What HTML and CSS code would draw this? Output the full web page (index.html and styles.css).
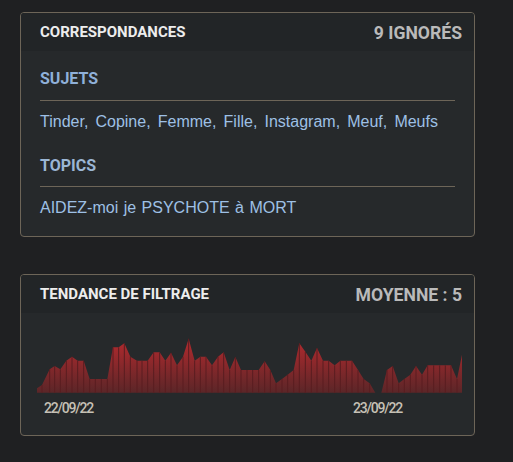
FILE: index.html
```html
<!DOCTYPE html>
<html lang="fr">
<head>
<meta charset="utf-8">
<title>Correspondances</title>
<link rel="stylesheet" href="styles.css">
</head>
<body>
<div class="page">
  <section class="card">
    <header class="card-head">
      <h2 class="card-title">CORRESPONDANCES</h2>
      <span class="card-stat">9 IGNORÉS</span>
    </header>
    <div class="card-body">
      <h3 class="sec-title">SUJETS</h3>
      <p class="sec-text sec-list">Tinder, Copine, Femme, Fille, Instagram, Meuf, Meufs</p>
      <h3 class="sec-title sec-topics">TOPICS</h3>
      <p class="sec-text">AIDEZ-moi je PSYCHOTE à MORT</p>
    </div>
  </section>

  <section class="card">
    <header class="card-head">
      <h2 class="card-title">TENDANCE DE FILTRAGE</h2>
      <span class="card-stat">MOYENNE : 5</span>
    </header>
    <div class="chart-body">
      <svg class="chart" viewBox="110 198 1275 201" preserveAspectRatio="none">
        <defs>
          <linearGradient id="fillGrad" x1="0" y1="236" x2="0" y2="398" gradientUnits="userSpaceOnUse">
            <stop offset="0" stop-color="#b32a2e"/>
            <stop offset="1" stop-color="#5b2628"/>
          </linearGradient>
        </defs>
        <polygon fill="url(#fillGrad)" points="110,398 110,385 125,375 148,328 163,318 180,328 198,302 215,290 232,302 250,302 268,357 285,357 303,357 321,357 338,262 355,262 372,250 390,290 410,302 425,302 442,302 460,277 478,277 495,302 512,278 530,316 548,290 565,236 583,302 600,290 617,290 635,316 653,290 670,277 688,330 705,291 722,330 740,330 757,330 775,330 793,304 810,330 827,370 845,357 862,344 880,330 897,250 915,275 933,302 950,264 968,302 985,302 1003,316 1020,302 1038,302 1055,302 1073,330 1090,357 1108,370 1125,398 1143,398 1160,330 1177,318 1195,370 1212,357 1230,344 1247,318 1265,344 1282,316 1300,316 1318,316 1335,316 1352,316 1370,357 1385,284 1385,398"/>
        <path fill="none" stroke="#5a1d20" stroke-width="3" d="M125 375V398M148 328V398M163 318V398M180 328V398M198 302V398M215 290V398M232 302V398M250 302V398M268 357V398M285 357V398M303 357V398M321 357V398M338 262V398M355 262V398M372 250V398M390 290V398M410 302V398M425 302V398M442 302V398M460 277V398M478 277V398M495 302V398M512 278V398M530 316V398M548 290V398M565 236V398M583 302V398M600 290V398M617 290V398M635 316V398M653 290V398M670 277V398M688 330V398M705 291V398M722 330V398M740 330V398M757 330V398M775 330V398M793 304V398M810 330V398M827 370V398M845 357V398M862 344V398M880 330V398M897 250V398M915 275V398M933 302V398M950 264V398M968 302V398M985 302V398M1003 316V398M1020 302V398M1038 302V398M1055 302V398M1073 330V398M1090 357V398M1108 370V398M1160 330V398M1177 318V398M1195 370V398M1212 357V398M1230 344V398M1247 318V398M1265 344V398M1282 316V398M1300 316V398M1318 316V398M1335 316V398M1352 316V398M1370 357V398"/>
      </svg>
      <div class="chart-dates">
        <span class="date">22/09/22</span>
        <span class="date">23/09/22</span>
      </div>
    </div>
  </section>
</div>
</body>
</html>
```
FILE: styles.css
```css
html, body {
  margin: 0;
  padding: 0;
}

body {
  background: #1f2022;
  font-family: Roboto, "Liberation Sans", sans-serif;
}

.page {
  width: 455px;
  padding: 12px 0 0 20px;
  display: flex;
  flex-direction: column;
  gap: 37px;
}

.card {
  border: 1px solid #6d6558;
  border-radius: 4px;
  background: #26292b;
  overflow: hidden;
}

.card-head {
  height: 38px;
  box-sizing: border-box;
  padding: 0 12px 0 19px;
  display: flex;
  align-items: center;
  justify-content: space-between;
  background: #222527;
}

.card-title {
  margin: 0;
  font-family: Roboto, sans-serif;
  font-weight: 700;
  font-size: 15px;
  line-height: 18px;
  color: #ededed;
}

.card-stat {
  padding-top: 2px;
  font-family: Roboto, sans-serif;
  font-weight: 700;
  font-size: 17.6px;
  line-height: 20px;
  color: #bababa;
}

.card-body {
  padding: 17px 19px 18px 19px;
}

.sec-title {
  margin: 0;
  padding: 1px 0 11px 0;
  border-bottom: 1px solid #6d6558;
  font-family: Roboto, sans-serif;
  font-weight: 700;
  font-size: 16px;
  line-height: 20px;
  color: #8fb0d9;
}

.sec-topics {
  margin-top: 23px;
  padding-bottom: 10px;
  color: #9bb6d4;
}

.sec-text {
  margin: 11px 0 0 0;
  font-family: "Liberation Sans", Arial, sans-serif;
  font-size: 16px;
  line-height: 20px;
  word-spacing: 1px;
  color: #9ec0e5;
}

.sec-list {
  word-spacing: 2.7px;
}

.chart-body {
  padding: 13px 12px 19px 16px;
}

.chart {
  display: block;
  width: 425px;
  height: 67px;
}

.chart-dates {
  margin-top: 7px;
  padding-left: 7px;
  display: grid;
  grid-template-columns: 309px auto;
}

.date {
  font-family: Roboto, sans-serif;
  font-weight: 500;
  font-size: 14px;
  line-height: 16px;
  letter-spacing: -1.2px;
  color: #c6c1b6;
}
```
